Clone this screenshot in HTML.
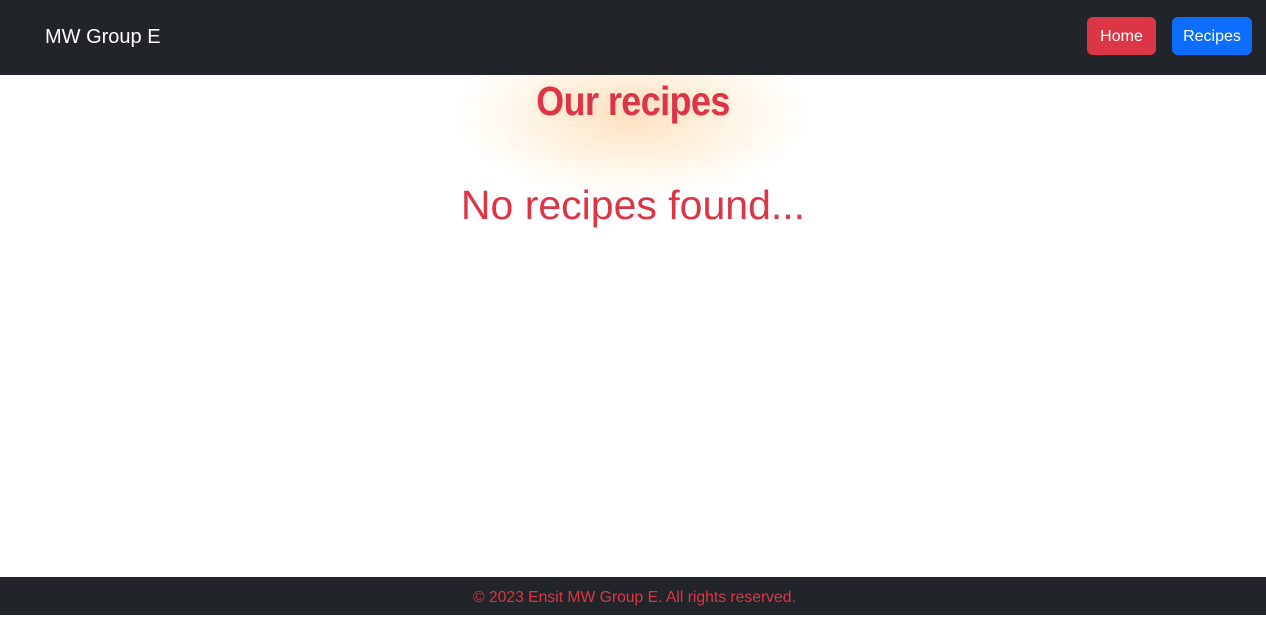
<!DOCTYPE html>
<html><head><style>
body{margin:0;width:1266px;height:615px;background:#fff;font-family:"Liberation Sans",sans-serif;position:relative;overflow:hidden}
.nav{position:absolute;top:0;left:0;width:1266px;height:75px;background:#212529;z-index:2}
.brand{position:absolute;left:45px;top:26px;color:#fff;font-size:20px}
.btn{position:absolute;top:17px;height:38px;border-radius:6px;color:#fff;font-size:16px;line-height:40px;text-align:center}
.glow{position:absolute;left:452px;top:30px;width:360px;height:170px;z-index:1;background:radial-gradient(ellipse at center,rgba(255,200,140,0.55) 0%,rgba(255,220,170,0.3) 40%,rgba(255,255,255,0) 70%)}
h1{position:absolute;z-index:3;left:0;width:1266px;top:78px;margin:0;text-align:center;color:#dc3545;font-size:41px;font-weight:bold;font-family:"Liberation Sans Narrow","Liberation Sans",sans-serif;transform:scaleX(0.87);letter-spacing:-0.5px;text-shadow:0 0 4px #fff,0 0 6px #ffd0a0,0.6px 0 0 #dc3545}
h2{position:absolute;z-index:3;left:0;width:1266px;top:182px;margin:0;text-align:center;color:#dc3545;font-size:41px;font-weight:normal}
.foot{position:absolute;left:0;top:577px;width:1266px;height:38px;background:#212529;color:#dc3545;font-size:15.7px;line-height:42px}
</style></head><body>
<div class="nav"><div class="brand">MW Group E</div>
<div class="btn" style="left:1087px;width:69px;background:#dc3545">Home</div>
<div class="btn" style="left:1172px;width:80px;background:#0d6efd">Recipes</div></div>
<div class="glow"></div>
<h1>Our recipes</h1>
<h2>No recipes found...</h2>
<div class="foot"><span style="position:absolute;left:473px">© 2023 Ensit MW Group E. All rights reserved.</span></div>
</body></html>
